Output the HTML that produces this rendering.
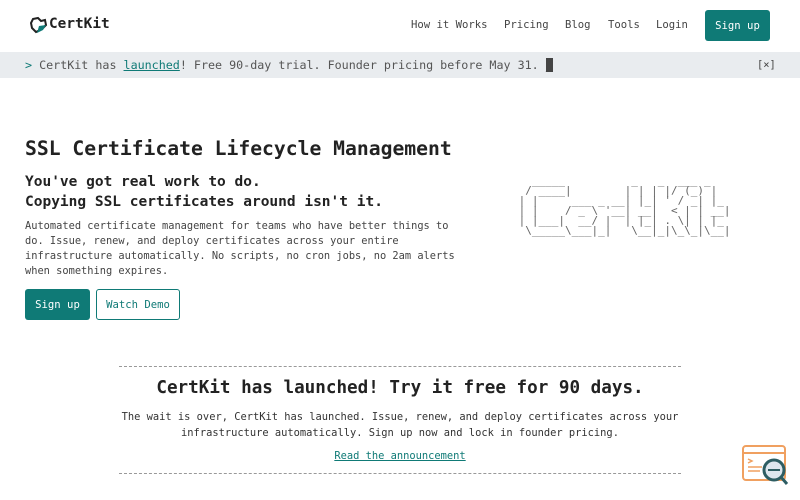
<!DOCTYPE html>
<html><head><meta charset="utf-8"><style>
*{margin:0;padding:0;box-sizing:border-box}
body{width:800px;height:500px;overflow:hidden;background:#fff;font-family:"DejaVu Sans Mono","Liberation Mono",monospace;color:#222;position:relative}
.abs{position:absolute;white-space:nowrap}
.nav a{position:absolute;top:19px;font-size:10.6px;color:#444;text-decoration:none}
.btn{position:absolute;background:#0f7a76;color:#fff;border-radius:3px;font-size:10.6px;display:flex;align-items:center;justify-content:center}
</style></head><body>
<svg class="abs" style="left:29px;top:16px" width="19" height="19" viewBox="0 0 19 19"><path d="M4 3 L9 2 L12 5 L16 4 L17 9 L13 13 L7 16 L3 12 L2 7 Z" fill="none" stroke="#222" stroke-width="2"/><path d="M8 17 L10 10 L17 9 L14 14 Z" fill="#0f7a76"/></svg>
<div class="abs" style="left:49px;top:16px;font-size:14.4px;font-weight:bold;color:#222">CertKit</div>
<div class="nav"><a style="left:411px">How it Works</a><a style="left:504px">Pricing</a><a style="left:565px">Blog</a><a style="left:608px">Tools</a><a style="left:656px">Login</a></div>
<div class="btn" style="left:705px;top:10px;width:65px;height:31px">Sign up</div>
<div class="abs" style="left:0;top:52px;width:800px;height:26px;background:#e9ecef"></div>
<div class="abs" style="left:25px;top:58px;font-size:11.7px;color:#555"><span style="color:#0f7a76">&gt;</span> CertKit has <span style="color:#0f7a76;text-decoration:underline">launched</span>! Free 90-day trial. Founder pricing before May 31. <span style="background:#444;color:#444">_</span></div>
<div class="abs" style="left:757px;top:59px;font-size:10.4px;color:#444">[×]</div>
<div class="abs" style="left:25px;top:137px;font-size:19.7px;font-weight:bold;color:#222">SSL Certificate Lifecycle Management</div>
<div class="abs" style="left:25px;top:172px;font-size:14.5px;font-weight:bold;line-height:20px;color:#222">You've got real work to do.<br>Copying SSL certificates around isn't it.</div>
<div class="abs" style="left:25px;top:219px;font-size:10.35px;line-height:15px;color:#444">Automated certificate management for teams who have better things to<br>do. Issue, renew, and deploy certificates across your entire<br>infrastructure automatically. No scripts, no cron jobs, no 2am alerts<br>when something expires.</div>
<div class="btn" style="left:25px;top:289px;width:65px;height:31px">Sign up</div>
<div class="btn" style="left:96px;top:289px;width:84px;height:31px;background:#fff;border:1px solid #0f7a76;color:#0f7a76">Watch Demo</div>
<pre class="abs" style="white-space:pre;left:512px;top:176px;font-size:11px;line-height:10px;color:#666;font-family:'DejaVu Sans Mono',monospace">   _____          _   _  ___ _   
  / ____|        | | | |/ (_) |  
 | |     ___ _ __| |_| ' / _| |_ 
 | |    / _ \ '__| __|  &lt; | | __|
 | |___|  __/ |  | |_| . \| | |_ 
  \_____\___|_|   \__|_|\_\_|\__|</pre>
<div class="abs" style="left:119px;top:366px;width:562px;border-top:1px dashed #999"></div>
<div class="abs" style="left:119px;top:473px;width:562px;border-top:1px dashed #999"></div>
<div class="abs" style="left:0;width:800px;text-align:center;top:378px;font-size:17.6px;font-weight:bold;color:#222">CertKit has launched! Try it free for 90 days.</div>
<div class="abs" style="left:0;width:800px;text-align:center;top:409px;font-size:10.4px;line-height:16px;color:#333">The wait is over, CertKit has launched. Issue, renew, and deploy certificates across your<br>infrastructure automatically. Sign up now and lock in founder pricing.</div>
<div class="abs" style="left:0;width:800px;text-align:center;top:450px;font-size:10.4px;color:#0f7a76;text-decoration:underline">Read the announcement</div>
<svg class="abs" style="left:740px;top:443px" width="52" height="46" viewBox="0 0 52 46"><rect x="3" y="3" width="42" height="34" rx="3" fill="#fff" stroke="#f0a060" stroke-width="2"/><line x1="3" y1="10" x2="45" y2="10" stroke="#f0a060" stroke-width="2"/><path d="M8 16 l4 2 -4 2 M8 24 h14 M8 28 h12" stroke="#f0a060" stroke-width="1.5" fill="none"/><circle cx="34" cy="27" r="10" fill="#dde6ee" stroke="#2d5d63" stroke-width="3"/><line x1="28" y1="27" x2="40" y2="27" stroke="#2d5d63" stroke-width="2"/><line x1="41" y1="34" x2="47" y2="41" stroke="#2d5d63" stroke-width="3"/></svg>
</body></html>
